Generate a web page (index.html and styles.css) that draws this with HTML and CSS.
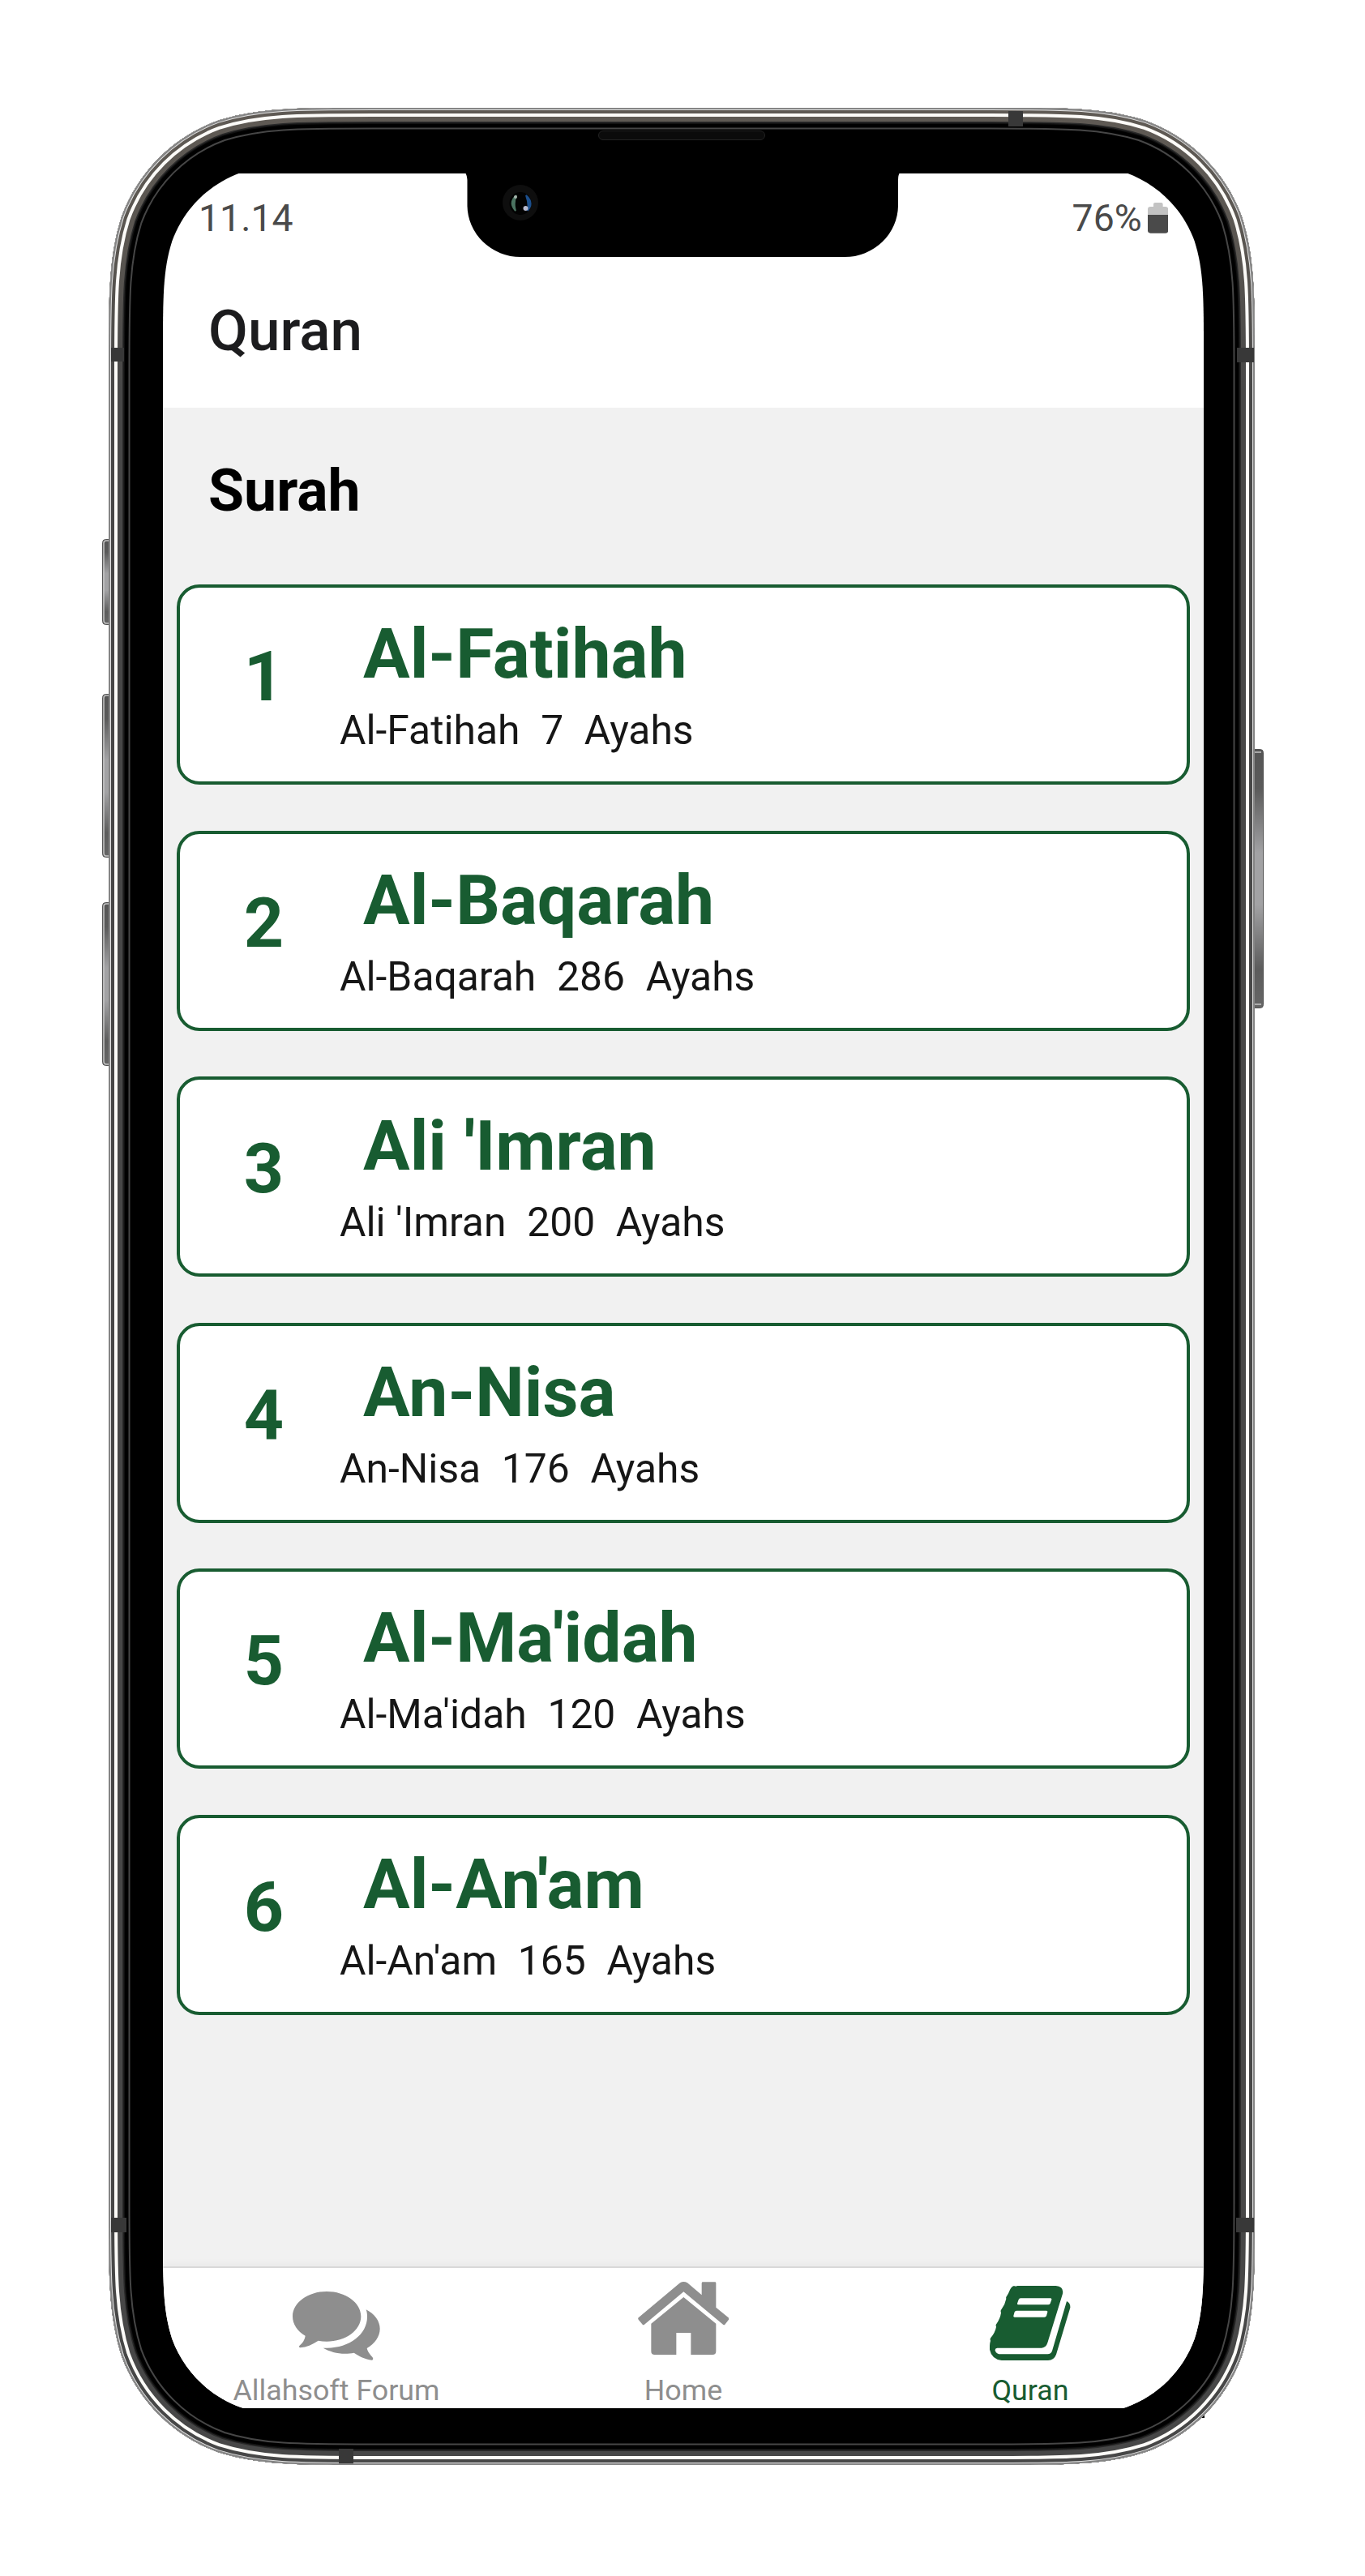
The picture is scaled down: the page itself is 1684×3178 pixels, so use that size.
FILE: index.html
```html
<!DOCTYPE html>
<html lang="en">
<head>
<meta charset="utf-8">
<title>Quran</title>
<link rel="stylesheet" href="styles.css">
</head>
<body>
<div class="stage">
  <svg class="device" viewBox="0 0 1684 3178" aria-hidden="true">
    <defs>
      <path id="body" d="M134,458.6C134,364.8 134,318 150,267.5C170,212.4 213.4,169 268.5,149C319,133 365.8,133 459.6,133H1222.4C1316.2,133 1363,133 1413.5,149C1468.6,169 1512,212.4 1532,267.5C1548,318 1548,364.8 1548,458.6V2715.4C1548,2809.2 1548,2856 1532,2906.5C1512,2961.6 1468.6,3005 1413.5,3025C1363,3041 1316.2,3041 1222.4,3041H459.6C365.8,3041 319,3041 268.5,3025C213.4,3005 170,2961.6 150,2906.5C134,2856 134,2809.2 134,2715.4Z"/>
      <clipPath id="bodyClip"><use href="#body"/></clipPath>
      <linearGradient id="key" x1="0" y1="0" x2="0" y2="1">
        <stop offset="0" stop-color="#555"/><stop offset=".15" stop-color="#5a5a5a"/><stop offset=".4" stop-color="#a2a2a4"/>
        <stop offset=".6" stop-color="#a2a2a4"/><stop offset=".85" stop-color="#5c5c5c"/><stop offset="1" stop-color="#666"/>
      </linearGradient>
      <linearGradient id="steel" x1="0" y1="0" x2="0" y2="1">
        <stop offset="0" stop-color="#5f5a54"/><stop offset=".06" stop-color="#5a5651"/><stop offset=".12" stop-color="#474747"/><stop offset="1" stop-color="#474747"/>
      </linearGradient>
    </defs>
    <rect x="199.500" y="2900" width="1286.500" height="83"/>
    <g stroke="#555" stroke-width="1" fill="url(#key)">
      <rect x="126.500" y="665.500" width="14" height="105" rx="4"/>
      <rect x="126.500" y="856.500" width="14" height="201" rx="4"/>
      <rect x="126.500" y="1113.500" width="14" height="201" rx="4"/>
      <rect x="1540.500" y="924.500" width="18" height="319" rx="4"/>
    </g>
    <g fill="none" stroke="#c4c4c4" stroke-width="1.500">
      <path d="M134 667H131Q128 667 128 670V765Q128 769 131 769H134M134 858H131Q128 858 128 861V1052Q128 1056 131 1056H134M134 1115H131Q128 1115 128 1118V1309Q128 1313 131 1313H134M1548 928H1556M1548 1239H1556"/>
    </g>
    <g clip-path="url(#bodyClip)" fill="none">
      <use href="#body" fill="#000"/>
      <use href="#body" stroke="#464646" stroke-width="53"/>
      <use href="#body" stroke="#000" stroke-width="49"/>
      <use href="#body" stroke="#111" stroke-width="40"/>
      <use href="#body" stroke="#2a2a2a" stroke-width="37"/>
      <use href="#body" stroke="url(#steel)" stroke-width="34"/>
      <use href="#body" stroke="#fcfbf8" stroke-width="22"/>
      <use href="#body" stroke="url(#steel)" stroke-width="14"/>
      <use href="#body" stroke="#e2e2e2" stroke-width="6"/>
      <use href="#body" stroke="#858585" stroke-width="4"/>
      <g fill="#383838">
        <rect x="137" y="429" width="16" height="17"/><rect x="1526" y="429" width="21" height="18"/>
        <rect x="1244" y="137" width="18" height="19"/><rect x="418" y="3021" width="18" height="18"/>
        <rect x="137" y="2736" width="19" height="18"/><rect x="1525" y="2736" width="22" height="18"/>
      </g>
    </g>
    <rect x="738.500" y="161.500" width="205" height="11" rx="5.500" fill="#0b0b0b" stroke="#222"/>
  </svg>

  <main class="screen">
    <div class="status">
      <span>11.14</span>
      <span class="power">76%
        <svg class="battery" viewBox="0 0 76 113"><path fill="#c3c3c3" d="M0 50V25Q0 15 10 15H21V6Q21 0 27 0H50Q56 0 56 6V15H66Q76 15 76 25V50Z"/><path fill="#4a4a4a" d="M0 45H76V103Q76 113 66 113H10Q0 113 0 103Z"/></svg>
      </span>
    </div>
    <header class="bar">Quran</header>
    <section class="content">
      <h1>Surah</h1>
      <div class="list">
        <article class="card"><b class="num">1</b><div class="info"><h2>Al-Fatihah</h2><p><span>Al-Fatihah</span><span>7</span><span>Ayahs</span></p></div></article>
        <article class="card"><b class="num">2</b><div class="info"><h2>Al-Baqarah</h2><p><span>Al-Baqarah</span><span>286</span><span>Ayahs</span></p></div></article>
        <article class="card"><b class="num">3</b><div class="info"><h2>Ali 'Imran</h2><p><span>Ali 'Imran</span><span>200</span><span>Ayahs</span></p></div></article>
        <article class="card"><b class="num">4</b><div class="info"><h2>An-Nisa</h2><p><span>An-Nisa</span><span>176</span><span>Ayahs</span></p></div></article>
        <article class="card"><b class="num">5</b><div class="info"><h2>Al-Ma'idah</h2><p><span>Al-Ma'idah</span><span>120</span><span>Ayahs</span></p></div></article>
        <article class="card"><b class="num">6</b><div class="info"><h2>Al-An'am</h2><p><span>Al-An'am</span><span>165</span><span>Ayahs</span></p></div></article>
      </div>
    </section>
    <nav class="tabs">
      <a class="tab"><svg class="forum" viewBox="752 441 323 254"><path d="M878 441C948 441 1005 482 1005 533S948 626 878 626C867 626 857 625 847 623C825 638 803 647 780 649C776 649 775 645 777 642C783 635 795 628 799 605C770 588 752 562 752 533C752 482 809 441 878 441Z"/><path d="M1024 508C1055 524 1075 550 1075 579C1075 608 1056 634 1027 651C1030 668 1044 678 1049 687C1051 691 1049 695 1045 695C1020 692 998 681 979 668C969 670 957 671 946 671C916 671 888 663 865 650C870 650 875 650 880 650C962 650 1028 600 1028 535C1028 526 1027 517 1024 508Z"/></svg><span>Allahsoft Forum</span></a>
      <a class="tab"><svg class="home" viewBox="140 105 338 270"><path d="M296 109Q309 101 323 109L376 154V110Q376 106 380 106H425Q429 106 429 110V200L475 238Q479 241 476 245L462 263Q459 266 455 263L309 142L164 263Q160 266 157 263L142 245Q139 241 142 238Z"/><path d="M309 162L429 260V362Q429 375 416 375H336V294H282V375H202Q189 375 189 362V260Z"/></svg><span>Home</span></a>
      <a class="tab active"><svg class="book" viewBox="248 419 299 276"><path fill-rule="evenodd" d="M338 419Q344 422 350 419H493Q523 422 518 448L462 630Q457 647 440 649H276Q267 650 268 658Q272 672 290 672H462Q475 672 479 660L533 476Q547 482 546 500L494 673Q486 694 464 695H292Q255 690 248 655Q247 635 251 622Q248 616 252 611Q268 592 272 571Q269 564 273 560Q287 540 290 519Q287 511 291 507Q305 488 309 467Q307 461 311 457C322 443 322 424 338 419ZM362 465Q357 465 355 470L350 484Q349 489 354 489H464Q470 489 472 484L477 470Q478 465 472 465ZM347 511Q342 511 340 516L336 530Q335 535 340 535H450Q456 535 458 530L462 516Q463 511 457 511Z"/></svg><span>Quran</span></a>
    </nav>
  </main>

  <svg class="notch" viewBox="576 213 532 104" aria-hidden="true">
    <path d="M574 213H1110Q1108 216 1108 222V253A66 64 0 0 1 1042 317H642.500A66 64 0 0 1 576.500 253V222Q576 216 574 213Z"/>
    <circle cx="642" cy="250" r="22" fill="#0e0e0e"/>
    <ellipse cx="642" cy="251" rx="13.500" ry="14" fill="#020202"/>
    <path d="M637 241Q627 250 636 260Q633 250 637 241Z" fill="#4b7361" stroke="#4b7361" stroke-width="2"/>
    <path d="M649 241Q659 250 651 260Q653 252 649 241Z" fill="#1c4f8c" stroke="#1c4f8c" stroke-width="2"/>
    <circle cx="636" cy="243" r="2" fill="#a5b4ac"/><circle cx="648.500" cy="257" r="3" fill="#b9bbd0"/>
  </svg>
</div>
</body>
</html>
```
FILE: styles.css
```css
* { box-sizing: border-box; }
body { margin: 0; background: #fff; font-family: Roboto, sans-serif; }
h1, h2, p { margin: 0; }

.stage { position: relative; width: 1684px; height: 3178px; padding: 214px 199px 207px 201px; overflow: hidden; }
.device { position: absolute; left: 0; top: 0; width: 1684px; height: 3178px; }
.notch { position: absolute; left: 576px; top: 213px; width: 532px; height: 104px; overflow: visible; }

.screen {
  position: relative;
  display: flex;
  flex-direction: column;
  height: 2757px;
  background: #fff;
  clip-path: path("M0,219C0,152 0,119 11.3,83.400C25.500,44.300 56.300,13.500 95.400,-0.700C131,-12 164,-12 231,-12H1053C1120,-12 1153,-12 1188.600,-0.700C1227.700,13.500 1258.500,44.300 1272.700,83.400C1284,119 1284,152 1284,219V2536C1284,2603 1284,2636 1272.700,2671.600C1258.500,2710.700 1227.700,2741.500 1188.600,2755.700C1153,2767 1120,2767 1053,2767H231C164,2767 131,2767 95.400,2755.700C56.300,2741.500 25.500,2710.700 11.300,2671.600C0,2636 0,2603 0,2536Z");
}

.status { display: flex; justify-content: space-between; height: 110px; padding: 0 44px 0 44px; font-size: 46.400px; line-height: 110px; color: #4a4a4a; }
.power { display: flex; align-items: center; gap: 7px; }
.battery { width: 25.300px; height: 37.700px; }

.bar { height: 179px; padding-left: 56px; font-size: 71px; font-weight: 500; line-height: 168px; color: #1c1c1e; }

.content { flex: 1; background: #f1f1f1; }
.content h1 { height: 218px; padding-left: 56px; font-size: 71.600px; font-weight: 700; line-height: 205px; color: #000; }
.list { display: flex; flex-direction: column; gap: 56.500px; padding: 0 17px; }
.card { display: flex; height: 247px; border: 4px solid #185c31; border-radius: 28px; background: #fff; color: #185c31; }
.num { width: 207px; text-align: center; font-size: 86px; line-height: 220px; }
.info { padding-top: 38px; }
.info h2 { padding-left: 19px; font-size: 85.800px; font-weight: 700; line-height: 88px; }
.info p { display: flex; gap: 25.700px; margin-left: -10px; font-size: 49.800px; line-height: 100px; color: #161616; }

.tabs { display: flex; height: 175px; border-top: 2px solid #d9d9d9; background: #fff; box-shadow: 0 -4px 8px rgba(0, 0, 0, .03); }
.tab { flex: 1; display: flex; flex-direction: column; align-items: center; color: #8e8e8e; font-size: 35.800px; line-height: 42px; }
.tab svg { fill: currentColor; }
.tab.active { color: #185c31; }
.forum { width: 107.700px; height: 84.700px; margin: 29px 0 16.300px; }
.home { width: 112.700px; height: 90px; margin: 17px 0 23px; }
.book { width: 99.700px; height: 92px; margin: 21.700px 0 16.300px; }
```
